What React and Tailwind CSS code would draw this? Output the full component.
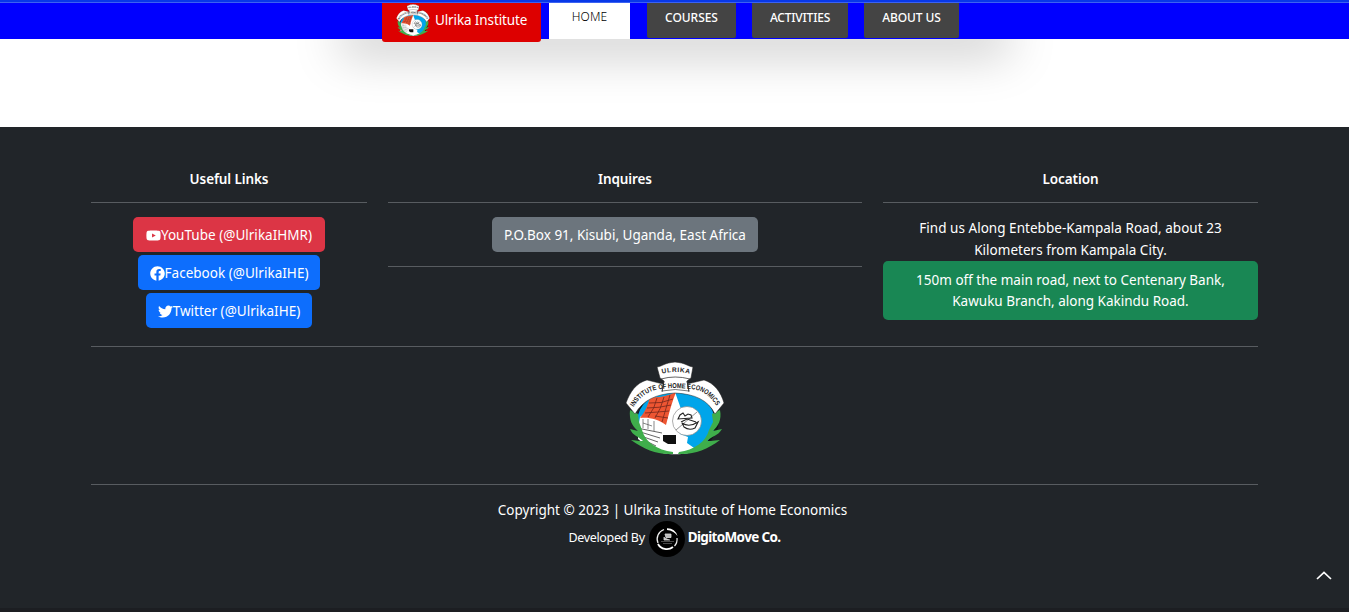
import React from "react";
import { FaYoutube, FaFacebook, FaTwitter } from "react-icons/fa";

function Crest({ className, id }) {
  return (
    <svg viewBox="0 0 100 98" className={className} aria-label="Ulrika Institute crest">
      <ellipse cx="53" cy="58" rx="41" ry="34" fill="#10151a" />
      <ellipse cx="51" cy="60" rx="39" ry="32" fill="#00a5ea" />
      <path d="M13 67L15 55L50 30L56 47L50 58L55 72L63 75L62 81L72 88C61 94 37 94 24 86L13 77Z" fill="#fff" />
      <path d="M25 35C34 36 43 34 51 30C47 40 44 51 41 63C33 57 24 55 15 56C20 50 23 43 25 35Z" fill="#ed5532" />
      <path d="M24 41Q36 42 48 37M22 46Q34 46 46 43M20 51Q33 50 44 49M30 54L43 56M32 36Q30 46 23 55M39 35Q36 47 30 56M45 33Q41 46 37 60" fill="none" stroke="#73261a" strokeWidth=".8" />
      <path d="M12 66L37 71M12 69L35 76M13 73L33 80M15 76L31 84M17 80L28 87" fill="none" stroke="#555" strokeWidth=".9" />
      <path d="M18 57V66M23 57V67M29 59V69M18 61L27 64" fill="none" stroke="#555" strokeWidth=".7" />
      <path d="M38 73H51V82H43L38 79Z" fill="#111" />
      <circle cx="62" cy="59" r="14.5" fill="#fff" stroke="#777" strokeWidth=".6" />
      <path d="M51 68L72 50" stroke="#777" strokeWidth=".8" />
      <path d="M53 57L55 53L58 51L60 54L63 52L66 53L67 56ZM56 60L62 57L71 60M57 61Q64 66 73 60L70 66Q64 69 59 65Z" fill="none" stroke="#222" strokeWidth="1.1" />
      <path d="M5 48L13 52L14 60L17 68C20 80 32 88 48 90V92H43C31 92 19 87 6 78C13 79 16 79 18 79C13 74 8 74 5 67L13 69C7 64 4 58 5 48ZM95 48L87 52L88 60L84 68C81 80 69 88 54 90L53 92H58C70 92 83 87 95 78C87 79 84 79 82 79C87 74 93 74 97 67L88 69C93 64 97 58 95 48Z" fill="#3fae4b" />
      <path d="M1 41C5 30 11 21 22 18L38 22H62L79 18C89 21 96 30 99 41L90 52C83 38 70 32 50 31C31 32 18 38 10 52Z" fill="#fff" stroke="#202020" strokeWidth=".5" />
      <path d="M32 5C38 4 39 1 50 0C61 1 62 4 68 5L66 16L62 19L64 29Q50 26 37 29L39 19L35 16Z" fill="#fff" stroke="#222" strokeWidth=".6" />
      <path d="M36 17Q50 13 65 17M39 19L37 30M62 19L64 30" fill="none" stroke="#222" strokeWidth=".7" />
      <path id={id + "top"} d="M35 12Q50 8 66 12" fill="none" />
      <path id={id + "arc"} d="M8 46C15 34 26 27 38 27Q50 25 63 27C77 27 86 34 94 48" fill="none" />
      <text fill="#222" fontSize="6.5" fontWeight="700" fontFamily="Liberation Sans, sans-serif">
        <textPath href={"#" + id + "top"} startOffset="2" textLength="28">ULRIKA</textPath>
      </text>
      <text fill="#222" fontSize="7" fontWeight="700" fontFamily="Liberation Sans, sans-serif">
        <textPath href={"#" + id + "arc"} startOffset="1" textLength="96" lengthAdjust="spacingAndGlyphs">INSTITUTE OF HOME ECONOMICS</textPath>
      </text>
    </svg>
  );
}

function DeveloperLogo() {
  return (
    <svg viewBox="0 0 36 36" className="size-9">
      <circle cx="18" cy="18" r="18" fill="#000" />
      <path d="M15 8.500A10 10 0 0 0 9 22" fill="none" stroke="#eee" strokeWidth="1.3" />
      <path d="M9 23A10 10 0 0 0 24 26" fill="none" stroke="#fff" strokeWidth="1.8" />
      <path d="M25.500 25A10 10 0 0 0 28 17" fill="none" stroke="#eee" strokeWidth="1.2" />
      <path d="M18 7.200Q26 7 28.500 15Q24.500 9.500 18 9Z" fill="#fff" />
      <path d="M16 13H22V16.500H17ZM15 16V19H21" fill="#bbb" stroke="#ddd" strokeWidth=".8" />
      <path d="M12 20.500H25M14 22.500H23" stroke="#666" strokeWidth=".7" />
    </svg>
  );
}

const links = [
  { Icon: FaYoutube, label: "YouTube (@UlrikaIHMR)", style: "w-48 bg-[#dc3545]" },
  { Icon: FaFacebook, label: "Facebook (@UlrikaIHE)", style: "w-[182px] bg-[#0d6efd]" },
  { Icon: FaTwitter, label: "Twitter (@UlrikaIHE)", style: "w-[166px] bg-[#0d6efd]" },
];

function Heading({ children }) {
  return <h2 className="h-[33px] border-b border-[#585c60] text-[13.5px] leading-[19px] font-semibold tracking-[-0.1px]">{children}</h2>;
}

export default function App() {
  return (
    <div className="flex h-[612px] w-full flex-col overflow-hidden bg-white font-['Noto_Sans',sans-serif] text-[13.5px] whitespace-nowrap text-white">
      <header className="relative z-10 h-[39px] shrink-0 bg-[#0000ff]">
        <div className="h-[3px] border-b border-[#3b62f2] bg-[#0838e8]" />
        <nav className="flex items-start pl-[382px] text-[12px]">
          <a className="flex h-[39px] w-[159px] items-start rounded-b-[3px] bg-[#dd0000] pl-[14px]">
            <Crest id="nav" className="mt-px h-[34px] w-[34px]" />
            <span className="ml-[5px] pt-[7px] text-[13.5px] leading-5 tracking-[-0.12px]">Ulrika Institute</span>
          </a>
          <a className="ml-2 h-9 w-[81px] bg-white pt-1 text-center leading-5 font-light tracking-[0.1px] text-black">HOME</a>
          <a className="ml-[17px] h-[35px] w-[89px] rounded-b-[2px] bg-[#444] pt-[5px] text-center leading-5 font-medium tracking-[-0.05px]">COURSES</a>
          <a className="ml-4 h-[35px] w-24 rounded-b-[2px] bg-[#444] pt-[5px] text-center leading-5 font-medium tracking-[-0.2px]">ACTIVITIES</a>
          <a className="ml-4 h-[35px] w-[95px] rounded-b-[2px] bg-[#444] pt-[5px] text-center leading-5 font-medium tracking-[-0.1px]">ABOUT US</a>
        </nav>
      </header>
      <div className="h-[88px] shrink-0">
        <div className="-mt-9 ml-[340px] h-9 w-[670px] shadow-[0_16px_48px_rgba(0,0,0,0.21)]" />
      </div>

      <footer className="relative flex h-[485px] shrink-0 flex-col border-b-4 border-[#1c1e22] bg-[#212529] pr-[91px] pl-[91px] text-center">
        <div className="flex h-[220px] shrink-0 gap-[21px] border-b border-[#585c60] pt-[43px]">
          <section className="w-[276px]">
            <Heading>Useful Links</Heading>
            <div className="flex flex-col items-center gap-[3px] pt-[14px]">
              {links.map(({ Icon, label, style }) => (
                <a key={label} className={"flex h-[35px] items-center justify-center rounded-[5px] pt-px " + style}>
                  <Icon className="size-[15px] shrink-0" />
                  <span className="pt-px tracking-[0.02px]">{label}</span>
                </a>
              ))}
            </div>
          </section>
          <section className="w-[474px]">
            <Heading>Inquires</Heading>
            <div className="flex justify-center border-b border-[#585c60] pt-[14px] pb-[14px]">
              <div className="h-[35px] w-[266px] rounded-[5px] bg-[#6c757d] pt-px leading-[35px]">P.O.Box 91, Kisubi, Uganda, East Africa</div>
            </div>
          </section>
          <section className="w-[375px]">
            <Heading>Location</Heading>
            <p className="pt-[14px] leading-[22px] tracking-[0.03px]">Find us Along Entebbe-Kampala Road, about 23<br />Kilometers from Kampala City.</p>
            <p className="h-[59px] rounded-[5px] bg-[#198754] pt-[9px] leading-[21px]">150m off the main road, next to Centenary Bank,<br />Kawuku Branch, along Kakindu Road.</p>
          </section>
        </div>
        <div className="flex h-[138px] shrink-0 justify-center border-b border-[#585c60] pt-[15px]">
          <Crest id="footer" className="h-[98px] w-[100px]" />
        </div>
        <p className="mt-[14px] pr-1 leading-[22px]">Copyright © 2023 | Ulrika Institute of Home Economics</p>
        <div className="flex h-9 items-center justify-center text-[12.5px]">
          <span className="-mt-0.5 tracking-[-0.35px]">Developed By</span>
          <span className="mr-[3px] ml-1"><DeveloperLogo /></span>
          <strong className="-mt-[3px] text-[13.5px] tracking-[-0.65px]">DigitoMove Co.</strong>
        </div>
        <svg className="absolute right-[17px] bottom-[28px] h-[9px] w-4" viewBox="0 0 16 9" fill="none" stroke="#fff" strokeWidth="1.7"><path d="M1 8L8 1.5L15 8" /></svg>
      </footer>
    </div>
  );
}
